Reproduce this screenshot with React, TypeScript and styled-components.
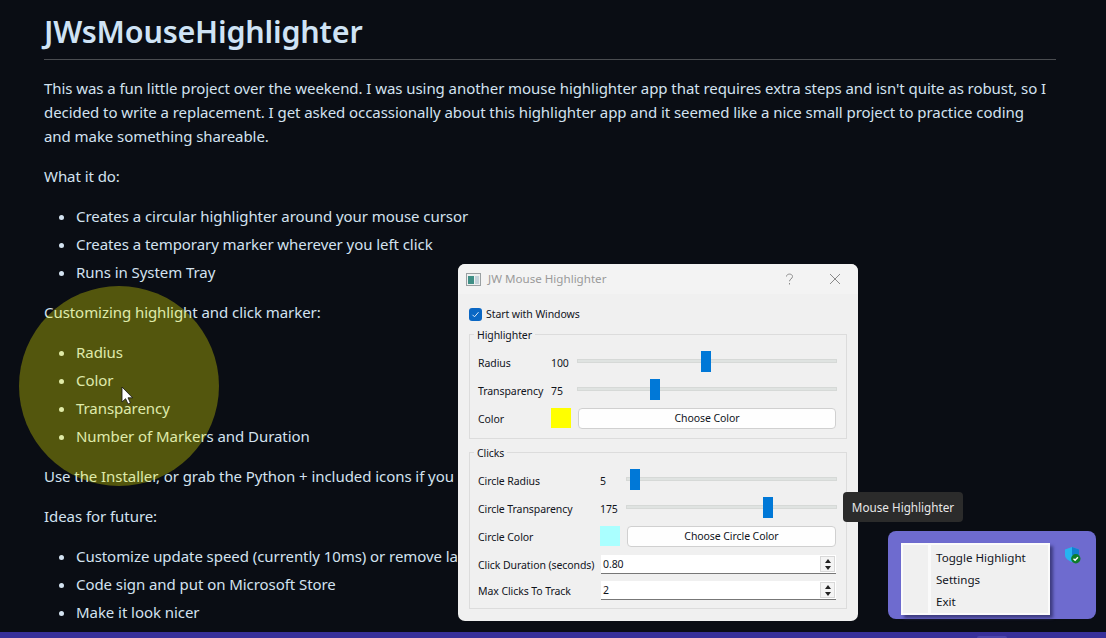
import React from 'react'
import styled, { createGlobalStyle } from 'styled-components'

const GlobalStyle = createGlobalStyle`
	html, body {
		margin: 0;
		padding: 0;
		background: #0a0d14;
	}
	* {
		box-sizing: border-box;
	}
`

const Screen = styled.div`
	position: relative;
	width: 1106px;
	height: 638px;
	overflow: hidden;
	background: #0a0d14;
	font-family: 'Noto Sans', 'Open Sans', sans-serif;
`

const Article = styled.main`
	width: 1056px;
	padding: 10px 0 0 44px;
	color: #d3e2f0;
	font-size: 15px;
	line-height: 24px;
	letter-spacing: -0.06px;
`

const Title = styled.h1`
	margin: 0;
	height: 50px;
	padding-top: 2px;
	border-bottom: 1px solid #4a4c50;
	color: #cfe3f5;
	font-size: 30.5px;
	font-weight: 600;
	line-height: 38px;
	letter-spacing: -0.2px;
`

const Text = styled.p`
	margin: 16px 0 0;
	max-width: 1005px;
`

const List = styled.ul`
	margin: 16px 0 0;
	padding: 0 0 0 32px;
`

const Item = styled.li`
	height: 24px;
	& + & {
		margin-top: 4px;
	}
`

const Highlight = styled.div`
	position: absolute;
	left: 19px;
	top: 286px;
	width: 200px;
	height: 200px;
	border-radius: 50%;
	background: rgba(255, 255, 0, 0.3);
`

const Cursor = styled.svg`
	position: absolute;
	left: 121px;
	top: 386px;
`

const Window = styled.section`
	position: absolute;
	left: 458px;
	top: 264px;
	width: 400px;
	height: 357px;
	display: flex;
	flex-direction: column;
	border-radius: 7px;
	overflow: hidden;
	background: #f0f0f0;
	color: #10141c;
	font-size: 10.5px;
	line-height: 16px;
	letter-spacing: -0.08px;
`

const TitleBar = styled.header`
	height: 30px;
	flex: none;
	display: flex;
	align-items: center;
	padding: 0 17px 0 8px;
	background: #f3f3f3;
	color: #9a9a9a;
	font-size: 11.6px;
	letter-spacing: 0;
`

const WindowName = styled.span`
	margin-left: 7px;
	flex: 1;
`

const WindowBody = styled.div`
	flex: 1;
	display: flex;
	flex-direction: column;
	padding: 12px 11px 0;
`

const CheckRow = styled.label`
	height: 16px;
	display: flex;
	align-items: center;
	gap: 4px;
`

const CheckBox = styled.span`
	width: 13px;
	height: 13px;
	display: flex;
	align-items: center;
	justify-content: center;
	border-radius: 3px;
	background: #0a67c4;
`

const Group = styled.fieldset<{ $top: number; $height: number; $value: number }>`
	position: relative;
	margin: ${(p) => p.$top}px 0 0;
	width: 378px;
	height: ${(p) => p.$height}px;
	border: 1px solid #dcdcdc;
	display: grid;
	grid-template-columns: ${(p) => p.$value}px 26px 1fr;
	align-content: start;
	padding: 14px 9px 0 8px;
`

const GroupTitle = styled.span`
	position: absolute;
	left: 4px;
	top: -8px;
	padding: 0 3px;
	background: #f0f0f0;
`

const Cell = styled.div<{ $h: number }>`
	height: ${(p) => p.$h}px;
	display: flex;
	align-items: center;
	white-space: nowrap;
`

const SliderCell = styled(Cell)`
	padding-bottom: 4px;
`

const ColorCell = styled(Cell)`
	padding-bottom: 2px;
`

const Track = styled.div`
	position: relative;
	flex: 1;
	height: 4px;
	background: #dfe3e1;
	border: 1px solid #d6d9d7;
`

const Handle = styled.span<{ $left: number }>`
	position: absolute;
	left: ${(p) => p.$left}px;
	top: -9px;
	width: 10px;
	height: 21px;
	background: #0078d7;
`

const Swatch = styled.span<{ $color: string }>`
	width: 20px;
	height: 20px;
	background: ${(p) => p.$color};
`

const ChooseButton = styled.button`
	flex: 1;
	height: 21px;
	margin: 0 1px;
	padding: 0;
	border: 1px solid #d0d0d0;
	border-radius: 4px;
	background: #fefefe;
	color: #10141c;
	font: inherit;
	letter-spacing: inherit;
`

const SpinBox = styled.div`
	grid-column: 2 / 4;
	height: 19px;
	margin: 0 1px;
	display: flex;
	align-items: center;
	justify-content: space-between;
	padding-left: 2px;
	background: #fff;
	border-bottom: 1px solid #777;
`

const Arrows = styled.span`
	width: 15px;
	height: 16px;
	margin-right: 1px;
	display: flex;
	flex-direction: column;
	align-items: center;
	justify-content: space-around;
	background: #f4f4f4;
	border: 1px solid #d8d8d8;
`

const Arrow = styled.i<{ $down?: boolean }>`
	width: 0;
	height: 0;
	border-left: 3px solid transparent;
	border-right: 3px solid transparent;
	${(p) => (p.$down ? 'border-top: 4px solid #222;' : 'border-bottom: 4px solid #222;')}
`

const RowGap = styled.div<{ $h: number }>`
	grid-column: 1 / 4;
	height: ${(p) => p.$h}px;
`

const Tip = styled.div`
	position: absolute;
	left: 843px;
	top: 492px;
	width: 120px;
	height: 30px;
	border-radius: 4px;
	background: #2b2b2b;
	color: #e8e8e8;
	font-size: 11.7px;
	line-height: 30px;
	text-align: center;
`

const Tray = styled.aside`
	position: absolute;
	left: 888px;
	top: 531px;
	width: 208px;
	height: 88px;
	border-radius: 8px;
	background: #6e6bcf;
`

const TrayMenu = styled.div`
	position: absolute;
	left: 13px;
	top: 12px;
	width: 149px;
	height: 72px;
	display: flex;
	border: 2px solid #fbfbfb;
	background: #f0f0f0;
	box-shadow: 3px 3px 3px #3e3c80;
	color: #10141c;
	font-size: 11.6px;
`

const Gutter = styled.div`
	width: 28px;
	border-right: 3px solid #fafafa;
`

const MenuList = styled.div`
	padding: 2px 0 0 5px;
	display: flex;
	flex-direction: column;
`

const MenuRow = styled.span`
	height: 22px;
	line-height: 22px;
`

const Shield = styled.svg`
	position: absolute;
	left: 176px;
	top: 15px;
`

const BottomBar = styled.footer`
	position: absolute;
	left: 0;
	right: 0;
	bottom: 0;
	height: 6px;
	background: #38309a;
`

const BarBump = styled.span`
	position: absolute;
	left: 977px;
	bottom: 0;
	width: 30px;
	height: 2px;
	border-radius: 2px 2px 0 0;
	background: #4d45ad;
`

const SpinArrows = () => (
	<Arrows>
		<Arrow />
		<Arrow $down />
	</Arrows>
)

const App = () => {
	return (
		<Screen>
			<GlobalStyle />
			<Article>
				<Title>JWsMouseHighlighter</Title>
				<Text>
					This was a fun little project over the weekend. I was using another mouse highlighter app that requires extra
					steps and isn't quite as robust, so I decided to write a replacement. I get asked occassionally about this
					highlighter app and it seemed like a nice small project to practice coding and make something shareable.
				</Text>
				<Text>What it do:</Text>
				<List>
					<Item>Creates a circular highlighter around your mouse cursor</Item>
					<Item>Creates a temporary marker wherever you left click</Item>
					<Item>Runs in System Tray</Item>
				</List>
				<Text>Customizing highlight and click marker:</Text>
				<List>
					<Item>Radius</Item>
					<Item>Color</Item>
					<Item>Transparency</Item>
					<Item>Number of Markers and Duration</Item>
				</List>
				<Text>Use the Installer, or grab the Python + included icons if you</Text>
				<Text>Ideas for future:</Text>
				<List>
					<Item>Customize update speed (currently 10ms) or remove la</Item>
					<Item>Code sign and put on Microsoft Store</Item>
					<Item>Make it look nicer</Item>
				</List>
			</Article>

			<Highlight />
			<Cursor width="13" height="20" viewBox="0 0 13 20">
				<path d="M1 1v15l3.600-3.300 2.400 5.300 2.400-1-2.400-5.200h4.600z" fill="#fff" stroke="#111" strokeWidth="0.8" />
			</Cursor>

			<Window>
				<TitleBar>
					<svg width="15" height="13" viewBox="0 0 15 13">
						<rect x="0.5" y="0.5" width="14" height="12" fill="#eef0f0" stroke="#9aa0a2" />
						<rect x="2" y="3" width="6" height="8" fill="#3f8f86" />
						<rect x="9" y="3" width="4" height="8" fill="#c4d2da" />
					</svg>
					<WindowName>JW Mouse Highlighter</WindowName>
					<svg width="60" height="13" viewBox="0 0 60 13">
						<path d="M5.500 3.500c0-3.200 6-3.200 6 0 0 2.400-3 2.400-3 4.800M8.500 10v1.500" fill="none" stroke="#8a8a8a" />
						<path d="M49 1l10 10M59 1L49 11" fill="none" stroke="#8a8a8a" />
					</svg>
				</TitleBar>
				<WindowBody>
					<CheckRow>
						<CheckBox>
							<svg width="9" height="9" viewBox="0 0 9 9">
								<path d="M1.500 4.800l2 2 4-4.600" fill="none" stroke="#dbe9f7" strokeWidth="1" />
							</svg>
						</CheckBox>
						Start with Windows
					</CheckRow>

					<Group $top={12} $height={105} $value={73}>
						<GroupTitle>Highlighter</GroupTitle>
						<Cell $h={28}>Radius</Cell>
						<Cell $h={28}>100</Cell>
						<SliderCell $h={28}>
							<Track>
								<Handle $left={123} />
							</Track>
						</SliderCell>
						<Cell $h={28}>Transparency</Cell>
						<Cell $h={28}>75</Cell>
						<SliderCell $h={28}>
							<Track>
								<Handle $left={72} />
							</Track>
						</SliderCell>
						<Cell $h={28}>Color</Cell>
						<ColorCell $h={28}>
							<Swatch $color="#ffff00" />
						</ColorCell>
						<ColorCell $h={28}>
							<ChooseButton>Choose Color</ChooseButton>
						</ColorCell>
					</Group>

					<Group $top={13} $height={157} $value={122}>
						<GroupTitle>Clicks</GroupTitle>
						<Cell $h={28}>Circle Radius</Cell>
						<Cell $h={28}>5</Cell>
						<SliderCell $h={28}>
							<Track>
								<Handle $left={3} />
							</Track>
						</SliderCell>
						<Cell $h={28}>Circle Transparency</Cell>
						<Cell $h={28}>175</Cell>
						<SliderCell $h={28}>
							<Track>
								<Handle $left={136} />
							</Track>
						</SliderCell>
						<Cell $h={28}>Circle Color</Cell>
						<ColorCell $h={28}>
							<Swatch $color="#aaffff" />
						</ColorCell>
						<ColorCell $h={28}>
							<ChooseButton>Choose Circle Color</ChooseButton>
						</ColorCell>
						<RowGap $h={4} />
						<Cell $h={19}>Click Duration (seconds)</Cell>
						<SpinBox>
							0.80
							<SpinArrows />
						</SpinBox>
						<RowGap $h={7} />
						<Cell $h={19}>Max Clicks To Track</Cell>
						<SpinBox>
							2
							<SpinArrows />
						</SpinBox>
					</Group>
				</WindowBody>
			</Window>

			<Tip>Mouse Highlighter</Tip>

			<Tray>
				<TrayMenu>
					<Gutter />
					<MenuList>
						<MenuRow>Toggle Highlight</MenuRow>
						<MenuRow>Settings</MenuRow>
						<MenuRow>Exit</MenuRow>
					</MenuList>
				</TrayMenu>
				<Shield width="17" height="18" viewBox="0 0 17 18">
					<path d="M1 3.500L8 1l7 2.500V9c0 3.500-3.200 5.500-7 7C4.200 14.500 1 12.500 1 9z" fill="#27b4f0" />
					<path d="M8 1l7 2.500V9H8z" fill="#1280d0" />
					<circle cx="11.800" cy="12.700" r="4.700" fill="#0f7d2a" />
					<path d="M9.500 12.700l1.600 1.500 2.800-2.900" fill="none" stroke="#fff" strokeWidth="1.400" />
				</Shield>
			</Tray>

			<BottomBar>
				<BarBump />
			</BottomBar>
		</Screen>
	)
}

export default App
